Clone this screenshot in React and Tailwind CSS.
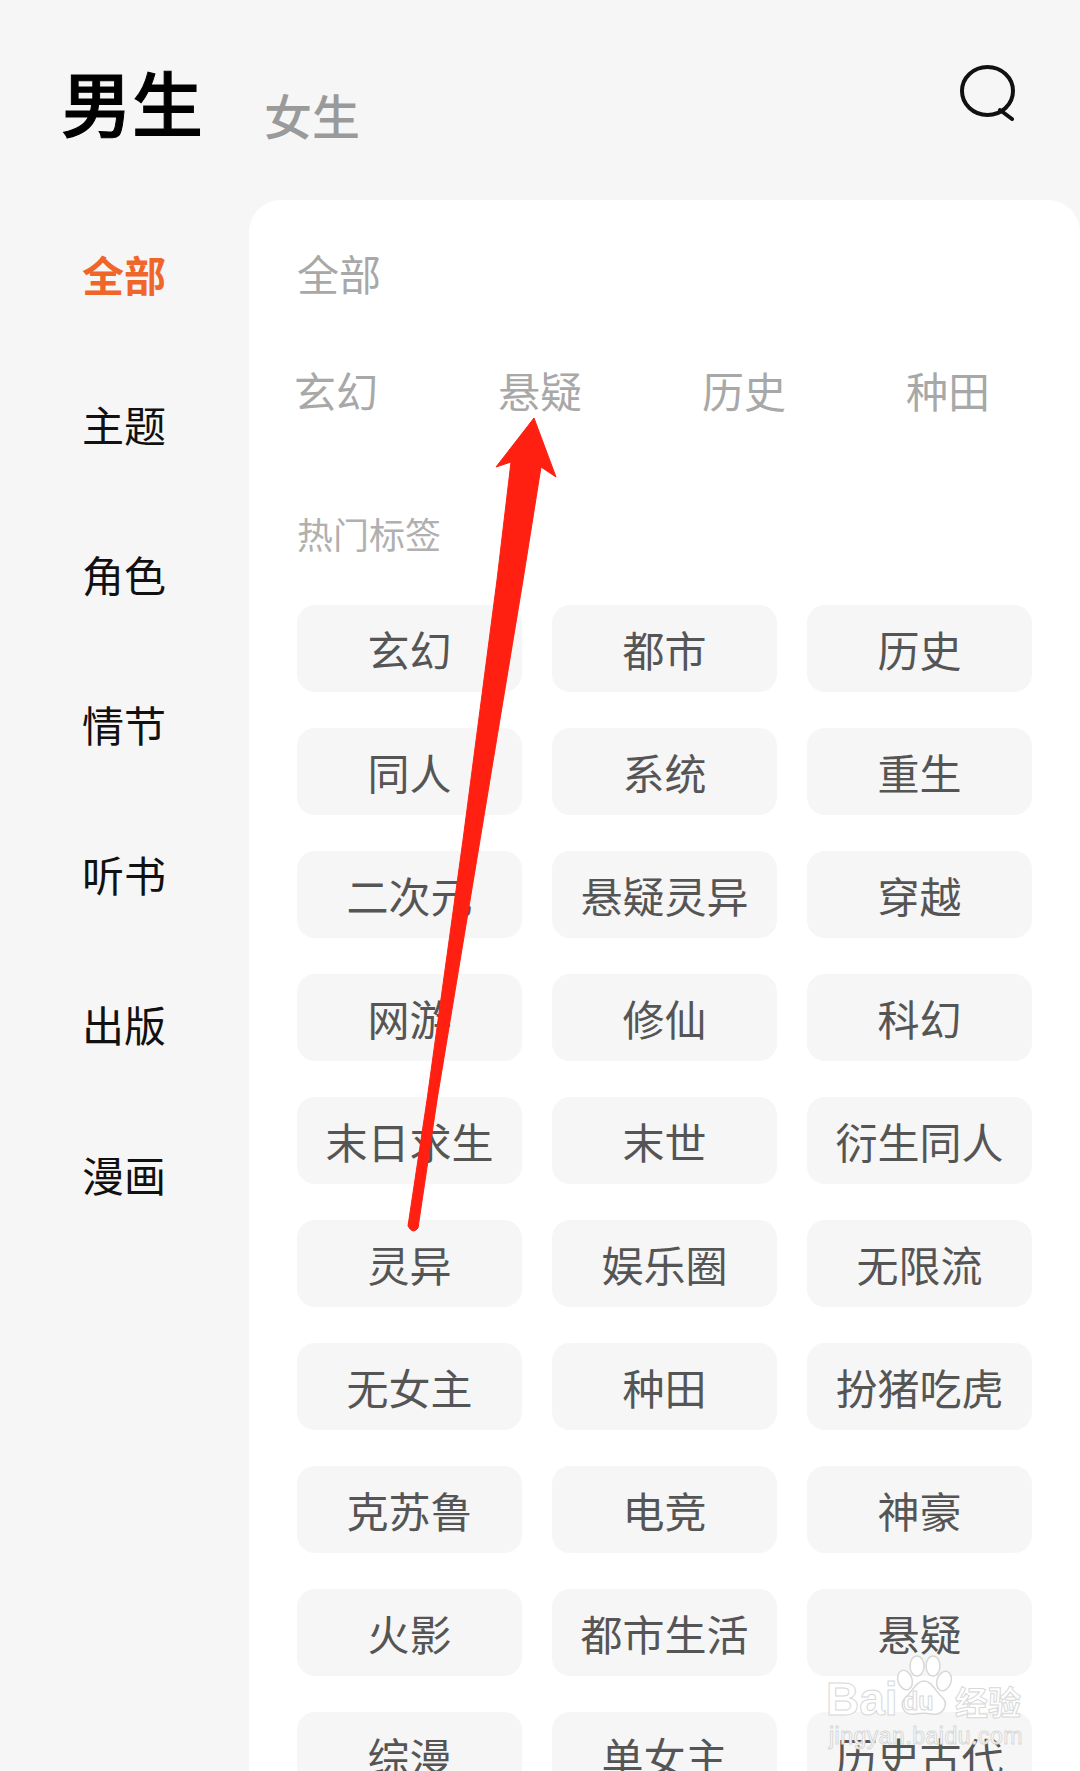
import React from 'react';

const sideItems = ['全部', '主题', '角色', '情节', '听书', '出版', '漫画'];
const subItems = ['玄幻', '悬疑', '历史', '种田'];
const tags = [
  '玄幻', '都市', '历史',
  '同人', '系统', '重生',
  '二次元', '悬疑灵异', '穿越',
  '网游', '修仙', '科幻',
  '末日求生', '末世', '衍生同人',
  '灵异', '娱乐圈', '无限流',
  '无女主', '种田', '扮猪吃虎',
  '克苏鲁', '电竞', '神豪',
  '火影', '都市生活', '悬疑',
  '综漫', '单女主', '历史古代',
];

const SearchIcon = () => (
  <svg className="w-[56px] h-[56px]" viewBox="0 0 56 56" fill="none" stroke="#111" strokeWidth="4" strokeLinecap="round">
    <ellipse cx="27.5" cy="26" rx="25.5" ry="24" />
    <path d="M40 45l12 9" />
  </svg>
);

const Arrow = () => (
  <svg className="absolute left-0 top-0 w-[1080px] h-[1771px] pointer-events-none" viewBox="0 0 1080 1771">
    <path
      d="M534 418L556 477L541 467L523 580L480 840L437 1100L418 1228Q413 1235 408 1226L427 1100L463 840L497 580L511 462L496 467Z"
      fill="#ff2012"
      stroke="#ff2012"
      strokeWidth="1"
      strokeLinejoin="round"
    />
  </svg>
);

const Watermark = () => (
  <div className="absolute left-[826px] top-[1655px] w-[200px] h-[95px] font-['Liberation_Sans',sans-serif] text-white [-webkit-text-stroke:1px_#d8d8d8]">
    <span className="absolute left-0 top-[22px] text-[46px] leading-[44px] font-bold">Bai</span>
    <svg className="absolute left-[66px] top-0 w-[62px] h-[62px]" viewBox="0 0 62 62" fill="#fff" stroke="#d8d8d8" strokeWidth="1.5">
      <ellipse cx="13" cy="25" rx="7" ry="10" transform="rotate(-20 13 25)" />
      <ellipse cx="25" cy="11" rx="7" ry="10" />
      <ellipse cx="41" cy="11" rx="7" ry="10" />
      <ellipse cx="52" cy="26" rx="7" ry="10" transform="rotate(20 52 26)" />
      <path d="M32 26C40 26 43 36 50 42C58 50 50 61 40 59C34 58 29 58 23 59C12 61 6 50 14 42C21 36 24 26 32 26Z" />
    </svg>
    <span className="absolute left-[77px] top-[34px] text-[25px] leading-[25px] font-bold">du</span>
    <span className="absolute left-[129px] top-[27px] text-[33px] leading-[38px] font-bold font-['Noto_Sans_CJK_SC',sans-serif]">经验</span>
    <span className="absolute left-[3px] top-[68px] text-[23px] leading-[26px] tracking-[0.5px]">jingyan.baidu.com</span>
  </div>
);

export default function App() {
  return (
    <div className="relative h-[1771px] overflow-hidden bg-[#f6f6f6] font-['Noto_Sans_CJK_SC',sans-serif]">
      <header className="h-[200px] flex pl-[61px] pr-[64px]">
        <div className="mt-[52px] text-[71px] leading-[96px] font-medium text-[#000] [-webkit-text-stroke:1px_#000]">男生</div>
        <div className="mt-[82px] ml-[61px] text-[48px] leading-[64px] font-medium text-[#9a9a9a]">女生</div>
        <div className="ml-auto mt-[65px]">
          <SearchIcon />
        </div>
      </header>

      <div className="flex">
        <aside className="w-[249px] shrink-0 -mt-[2px] pl-[82px]">
          {sideItems.map((item, i) => (
            <div
              key={item}
              className={`h-[150px] flex items-center text-[42px] ${i === 0 ? 'font-bold text-[#f0662a]' : 'text-[#111]'}`}
            >
              {item}
            </div>
          ))}
        </aside>

        <main className="flex-1 min-w-0 h-[1571px] bg-white rounded-t-[32px] pt-[43px] px-[48px]">
          <div className="h-[60px] leading-[60px] text-[42px] text-[#a8a8a8]">全部</div>
          <div className="mt-[57px] -ml-[3px] flex gap-[120px] h-[60px] leading-[60px] text-[42px] text-[#a8a8a8]">
            {subItems.map((item) => (
              <div key={item} className="shrink-0">{item}</div>
            ))}
          </div>
          <div className="mt-[88px] h-[50px] leading-[50px] text-[36px] text-[#b0b0b0]">热门标签</div>
          <div className="mt-[47px] grid grid-cols-3 gap-x-[30px] gap-y-[36px] auto-rows-[87px]">
            {tags.map((tag, i) => (
              <div
                key={i}
                className="flex items-center justify-center rounded-[18px] bg-[#f6f6f6] text-[42px] text-[#555]"
              >
                {tag}
              </div>
            ))}
          </div>
        </main>
      </div>

      <Arrow />
      <Watermark />
    </div>
  );
}
